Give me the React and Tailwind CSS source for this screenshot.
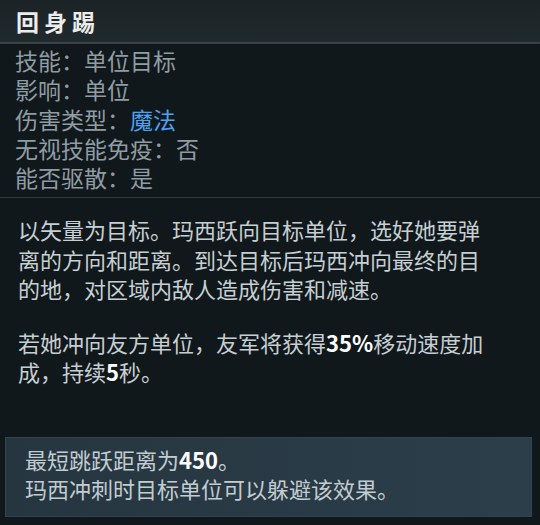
export default function App() {
  const font = { fontFamily: '"Noto Sans CJK SC", "Noto Sans", sans-serif' };
  return (
    <div className="w-[540px] h-[525px] bg-[#11181b] overflow-hidden flex flex-col [text-spacing-trim:space-all]" style={font}>
      <div className="h-[42px] bg-gradient-to-b from-[#1b2326] to-[#20292c] flex items-center pl-[16px]">
        <span className="text-[23px] font-bold tracking-[5px] text-[#ececec] leading-none">回身踢</span>
      </div>
      <div className="h-[2px] bg-[#38444a]" />
      <div className="h-[2px] bg-gradient-to-b from-[#0c1215] to-[#11181b]" />
      <div className="flex flex-col pl-[15px] text-[23px] leading-[29.3px] text-[#8f9ca3]">
        <div>技能：单位目标</div>
        <div>影响：单位</div>
        <div>
          伤害类型：<span className="text-[#4aa3f0]">魔法</span>
        </div>
        <div>无视技能免疫：否</div>
        <div>能否驱散：是</div>
      </div>
      <div className="mt-[5px] h-[1px] bg-[#2a3a3e]" />
      <div className="pt-[17px] pl-[18px] w-[488px] text-[22px] leading-[29.5px] text-[#c6cfd3]">
        <p>
          以矢量为目标。玛西跃向目标单位，选好她要弹离的方向和距离。到达目标后玛西冲向最终的目的地，对区域内敌人造成伤害和减速。
        </p>
        <p className="mt-[24px]">
          若她冲向友方单位，友军将获得<span className="font-bold text-white">35%</span>移动速度加成，持续<span className="font-bold text-white">5</span>秒。
        </p>
      </div>
      <div className="mt-[50px] mx-[5px] w-[527px] bg-gradient-to-r from-[#263640] to-[#2b3e4a] border border-[#2f4350] pt-[7px] pb-[12px] pl-[19px] text-[22px] leading-[29.5px] text-[#c3ccd0]">
        <div>
          最短跳跃距离为<span className="font-bold text-white">450</span>。
        </div>
        <div>玛西冲刺时目标单位可以躲避该效果。</div>
      </div>
    </div>
  );
}
